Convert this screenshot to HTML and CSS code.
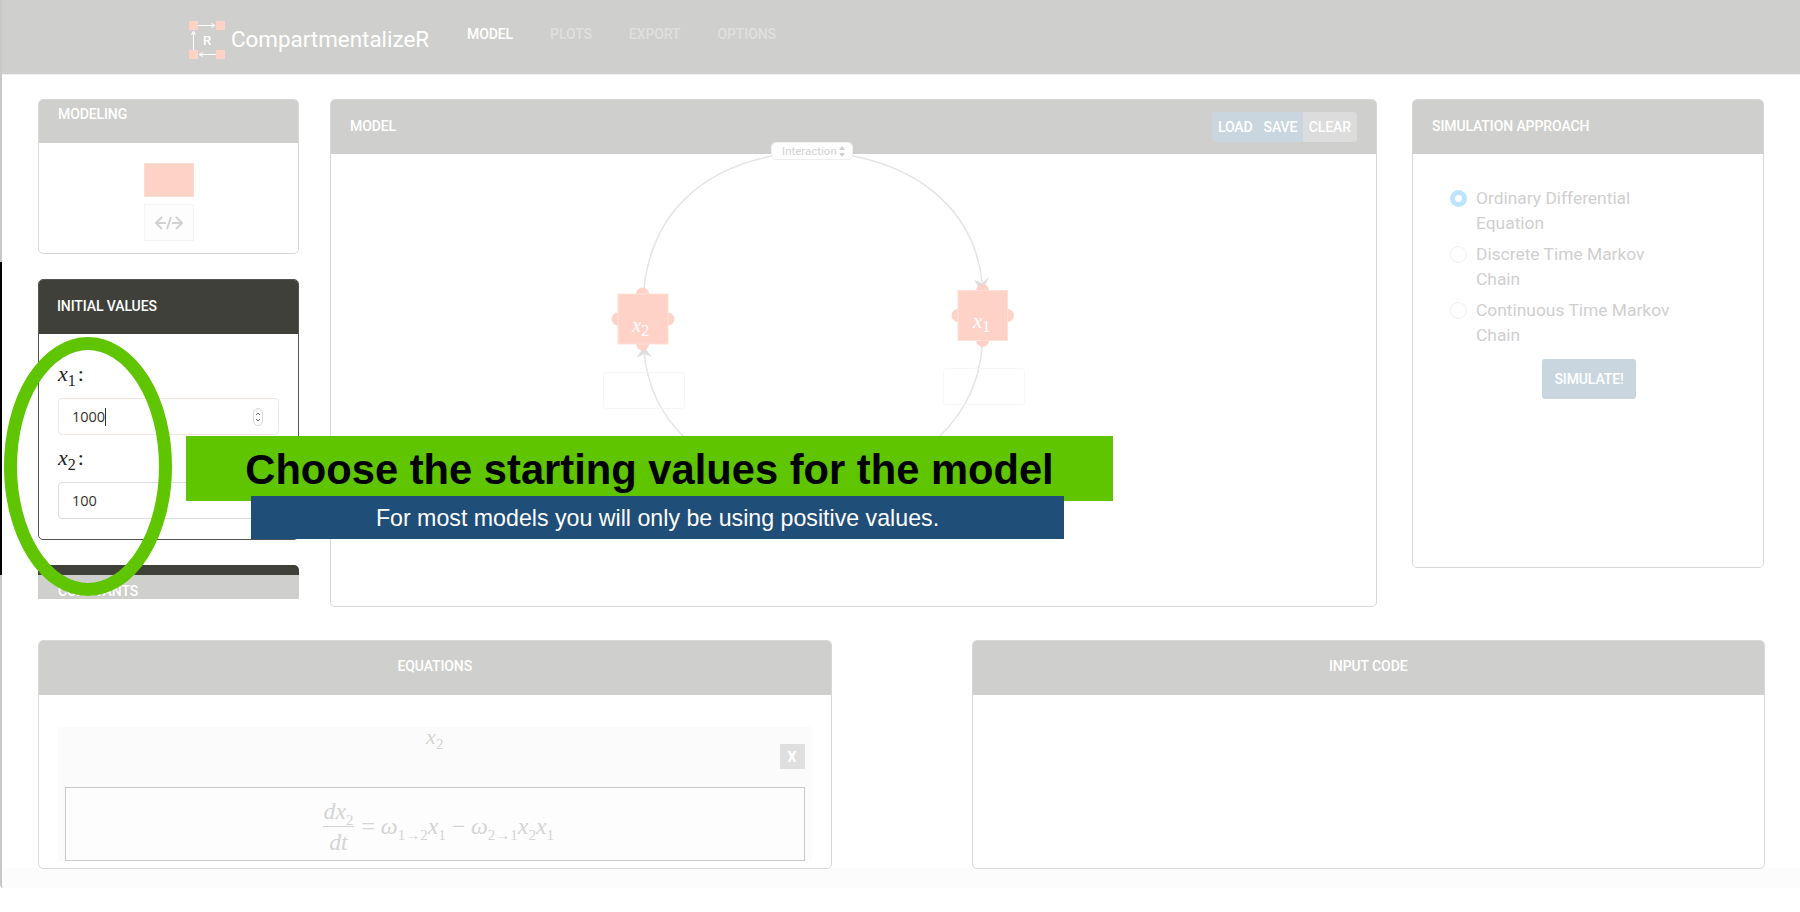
FILE: index.html
```html
<!DOCTYPE html>
<html lang="en">
<head>
    <meta charset="UTF-8">
    <title>CompartmentalizeR</title>
    <link rel="stylesheet" href="styles.css">
</head>
<body>
<div class="frame">
    <div class="edge-dark"></div>

    <nav class="navbar">
        <svg class="logo" width="37" height="38" viewBox="0 0 37 38">
            <rect x="0" y="0" width="9" height="9" fill="#ffd2c8"/>
            <rect x="27" y="0" width="9" height="9" fill="#ffd2c8"/>
            <rect x="0" y="29" width="9" height="9" fill="#ffd2c8"/>
            <rect x="27" y="29" width="9" height="9" fill="#ffd2c8"/>
            <path d="M9 4.5H25M22 2.5L26 4.5L22 6.5" stroke="#fff" stroke-width="1" fill="none"/>
            <path d="M27 33.5H11M14 31.5L10 33.5L14 35.5" stroke="#fff" stroke-width="1" fill="none"/>
            <path d="M4.5 29V11M2.5 14L4.5 10L6.5 14" stroke="#fff" stroke-width="1" fill="none"/>
            <text x="18" y="24" class="logo-r">R</text>
        </svg>
        <span class="brand">CompartmentalizeR</span>
        <ul class="nav-links">
            <li class="active">MODEL</li>
            <li>PLOTS</li>
            <li>EXPORT</li>
            <li>OPTIONS</li>
        </ul>
    </nav>

    <main class="top-row">
        <!-- left column, cut off at the bottom -->
        <aside class="sidebar">
            <section class="panel modeling">
                <div class="panel-head modeling-head">MODELING</div>
                <div class="modeling-body">
                    <div class="pink-tool"></div>
                    <div class="code-tool">
                        <svg width="28" height="14" viewBox="0 0 28 14">
                            <path d="M7 1L1 7L7 13M1 7H11M21 1L27 7L21 13M27 7H17M16 1L12 13" stroke="#d2d2d2" stroke-width="2" fill="none"/>
                        </svg>
                    </div>
                </div>
            </section>

            <section class="panel dark">
                <div class="panel-head dark-head">INITIAL VALUES</div>
                <div class="values-body">
                    <label class="math-label"><i>x</i><sub>1</sub><span class="colon">:</span></label>
                    <div class="fake-input focused">
                        <span>1000</span><span class="caret"></span>
                        <svg class="spinner" width="10" height="18" viewBox="0 0 10 18">
                            <rect x="0.5" y="0.5" width="9" height="17" rx="4.5" fill="#fff" stroke="#d8d8d8"/>
                            <path d="M3 7L5 5L7 7M3 11L5 13L7 11" stroke="#666" fill="none"/>
                        </svg>
                    </div>
                    <label class="math-label second"><i>x</i><sub>2</sub><span class="colon">:</span></label>
                    <div class="fake-input">
                        <span>100</span>
                    </div>
                </div>
            </section>

            <section class="constants">
                <div class="constants-dark"></div>
                <div class="constants-fade">CONSTANTS</div>
            </section>
        </aside>

        <section class="panel model">
            <div class="panel-head model-head">
                <span>MODEL</span>
                <div class="btn-group">
                    <button class="btn-blue">LOAD</button>
                    <button class="btn-blue">SAVE</button>
                    <button class="btn-gray">CLEAR</button>
                </div>
            </div>
            <svg class="diagram" width="1047" height="508" viewBox="330 99 1047 508">
                <path class="link" d="M644 288C652 215 700 170 772 156"/>
                <path class="link" d="M853 156C925 170 975 215 982 282"/>
                <path class="link" d="M982 347C980 380 965 412 939 437"/>
                <path class="link" d="M644 352C648 390 662 415 684 437"/>
                <rect class="slot" x="603.5" y="372.5" width="81" height="36" rx="3"/>
                <rect class="slot" x="943.5" y="368.5" width="81" height="36" rx="3"/>
                <polygon class="head" points="982,292 974,280 982,283 989,277"/>
                <polygon class="head" points="644,347 636,358 644,354 652,357"/>
                <!-- x2 node -->
                <circle class="port" cx="642.5" cy="294" r="6.5"/>
                <circle class="port" cx="642.5" cy="344" r="6.5"/>
                <circle class="port" cx="618" cy="319" r="6.5"/>
                <circle class="port" cx="668" cy="319" r="6.5"/>
                <rect class="node" x="618" y="294" width="50" height="50"/>
                <text class="node-label" x="632" y="332">x<tspan class="node-sub" dy="4">2</tspan></text>
                <!-- x1 node -->
                <circle class="port" cx="982.5" cy="290.5" r="6.5"/>
                <circle class="port" cx="982.5" cy="340.5" r="6.5"/>
                <circle class="port" cx="958" cy="315.5" r="6.5"/>
                <circle class="port" cx="1007.5" cy="315.5" r="6.5"/>
                <rect class="node" x="958" y="290.5" width="49.5" height="50"/>
                <text class="node-label" x="973" y="328">x<tspan class="node-sub" dy="4">1</tspan></text>
            </svg>
            <div class="interaction">
                <span>Interaction</span>
                <svg width="6" height="11" viewBox="0 0 6 11"><path d="M3 0L6 4H0ZM3 11L0 7H6Z" fill="#cfcfcf"/></svg>
            </div>
        </section>

        <section class="panel sim">
            <div class="panel-head sim-head">SIMULATION APPROACH</div>
            <div class="sim-body">
                <div class="radio-row">
                    <span class="radio checked"></span>
                    <span class="radio-text">Ordinary Differential Equation</span>
                </div>
                <div class="radio-row">
                    <span class="radio"></span>
                    <span class="radio-text">Discrete Time Markov Chain</span>
                </div>
                <div class="radio-row">
                    <span class="radio"></span>
                    <span class="radio-text">Continuous Time Markov Chain</span>
                </div>
                <button class="simulate">SIMULATE!</button>
            </div>
        </section>
    </main>

    <div class="bottom-row">
        <section class="panel bottom-panel">
            <div class="panel-head centered">EQUATIONS</div>
            <div class="equations-body">
                <div class="eq-card">
                    <div class="eq-top">
                        <span class="eq-name"><i>x</i><sub>2</sub></span>
                        <span class="eq-close">X</span>
                    </div>
                    <div class="eq-box">
                        <span class="fraction">
                            <span class="numer"><i>dx</i><sub>2</sub></span>
                            <span class="denom"><i>dt</i></span>
                        </span>
                        <span class="eq-rhs">= <i>ω</i><sub>1→2</sub><i>x</i><sub>1</sub> − <i>ω</i><sub>2→1</sub><i>x</i><sub>2</sub><i>x</i><sub>1</sub></span>
                    </div>
                </div>
            </div>
        </section>
        <section class="panel bottom-panel">
            <div class="panel-head centered">INPUT CODE</div>
        </section>
    </div>

    <!-- tutorial overlay -->
    <svg class="ring" width="180" height="270" viewBox="0 0 180 270">
        <ellipse cx="88" cy="134.5" rx="77.5" ry="123" fill="none" stroke="#5ec500" stroke-width="13"/>
    </svg>
    <div class="callout">
        <h1 class="callout-title">Choose the starting values for the model</h1>
        <p class="callout-sub">For most models you will only be using positive values.</p>
    </div>
</div>
</body>
</html>
```

FILE: styles.css
```css
* {
    box-sizing: border-box;
}
body {
    margin: 0;
    background-color: #fff;
    font-family: Roboto, sans-serif;
}
.frame {
    position: relative;
    height: 888px;
    border-left: 2px solid #c8c8c8;
    border-bottom-left-radius: 4px;
    background: linear-gradient(#fff 868px, #fcfcfc 868px);
}
.edge-dark {
    position: absolute;
    left: -2px;
    top: 262px;
    width: 2px;
    height: 313px;
    background-color: #000;
}

/* navbar */
.navbar {
    height: 75px;
    display: flex;
    align-items: center;
    padding-left: 187px;
    background-color: #cfcfcd;
    border-bottom: 1px solid #eee;
}
.logo {
    margin-top: 5px;
    flex-shrink: 0;
}
.logo-r {
    font-family: Roboto, sans-serif;
    font-size: 13px;
    font-weight: 500;
    fill: #fff;
    text-anchor: middle;
}
.brand {
    margin-left: 5px;
    margin-top: 4px;
    font-size: 22.4px;
    color: #fff;
}
.nav-links {
    display: flex;
    gap: 37px;
    list-style: none;
    margin: -7px 0 0 38px;
    padding: 0;
    font-size: 14px;
    font-weight: 500;
    letter-spacing: -0.1px;
    color: #e0e0de;
}
.nav-links .active {
    color: #fff;
}

/* panels */
.panel {
    border: 1.5px solid #d8d8d8;
    border-radius: 5px;
    background-color: #fff;
}
.panel-head {
    height: 54px;
    padding: 0 18px 2px 18px;
    display: flex;
    align-items: center;
    background-color: #cfcfcd;
    color: #fff;
    font-size: 14px;
    font-weight: 500;
    letter-spacing: -0.1px;
    border-radius: 4px 4px 0 0;
}
.panel-head.centered {
    justify-content: center;
    padding-bottom: 4px;
}
.top-row {
    display: grid;
    grid-template-columns: 261px 1047px 356px;
    column-gap: 31px;
    margin: 24px 0 0 36px;
    align-items: start;
}
.top-row .sim {
    margin-left: 4px;
    height: 469px;
}
.sim-head {
    padding-left: 19px;
}

/* sidebar */
.sidebar {
    height: 500px;
    overflow: hidden;
}
.modeling {
    height: 155px;
}
.modeling-head {
    height: 43px;
    align-items: flex-start;
    padding-top: 6px;
    padding-left: 19px;
}
.modeling-body {
    display: flex;
    flex-direction: column;
    align-items: center;
    padding-top: 20px;
}
.pink-tool {
    width: 50px;
    height: 34px;
    background-color: #ffd2c8;
    border: 1px solid #fbdcd5;
}
.code-tool {
    width: 50px;
    height: 37px;
    margin-top: 7px;
    display: flex;
    align-items: center;
    justify-content: center;
    background-color: #fdfdfd;
    border: 1px solid #f4f4f4;
}
.dark {
    height: 261px;
    margin-top: 25px;
    border-color: #55554f;
}
.dark-head {
    background-color: #40403a;
    height: 54px;
    padding-bottom: 2px;
}
.values-body {
    padding: 26px 19px 0 19px;
}
.math-label {
    display: block;
    height: 38px;
    font-family: "Liberation Serif", serif;
    font-size: 22px;
    color: #222;
    line-height: 28px;
}
.math-label sub {
    font-size: 16px;
    line-height: 0;
}
.colon {
    margin-left: 2px;
}
.math-label.second {
    margin-top: 9px;
}
.fake-input {
    display: flex;
    align-items: center;
    width: 221px;
    height: 37px;
    padding: 0 13px;
    font-family: "Open Sans", sans-serif;
    font-size: 14.5px;
    color: #333;
    border: 1.5px solid #ddd;
    border-radius: 4px;
    background-color: #fff;
}
.fake-input.focused {
    border-color: #efe6dd;
}
.caret {
    width: 1px;
    height: 18px;
    background-color: #333;
}
.spinner {
    margin-left: auto;
    margin-right: 2px;
}
.constants {
    margin-top: 25px;
}
.constants-dark {
    height: 10px;
    background-color: #40403a;
    border-radius: 5px 5px 0 0;
}
.constants-fade {
    height: 24px;
    padding: 8px 0 0 20px;
    background-color: #cfcfcd;
    color: #fff;
    font-size: 14px;
    line-height: 17px;
    font-weight: 500;
    letter-spacing: -0.1px;
}

/* model panel */
.model {
    position: relative;
    height: 508px;
}
.model-head {
    justify-content: space-between;
    padding-left: 19px;
    padding-right: 19px;
}
.btn-group {
    display: flex;
    height: 30px;
    margin-top: 2px;
    border-radius: 4px;
    overflow: hidden;
}
.btn-group button {
    border: 0;
    padding: 0 6px;
    font-family: Roboto, sans-serif;
    font-size: 14px;
    font-weight: 500;
    letter-spacing: -0.1px;
    color: #fff;
}
.btn-group .btn-blue {
    padding: 0 5.5px;
}
.btn-blue {
    background-color: #c9d6df;
}
.btn-gray {
    background-color: #dcdcdc;
}
.diagram {
    position: absolute;
    left: -1.5px;
    top: -1.5px;
}
.link {
    fill: none;
    stroke: #e4e4e4;
    stroke-width: 1.5;
}
.slot {
    fill: none;
    stroke: #f6f6f6;
}
.head {
    fill: #dedede;
}
.port, .node {
    fill: #ffd2c8;
}
.node {
    stroke: #ffe1da;
}
.node-label {
    font-family: "Liberation Serif", serif;
    font-style: italic;
    font-size: 21px;
    fill: #fff;
}
.node-sub {
    font-style: normal;
    font-size: 16px;
}
.interaction {
    position: absolute;
    left: 440px;
    top: 42px;
    width: 82px;
    height: 18px;
    display: flex;
    align-items: center;
    justify-content: space-between;
    padding: 0 7px 0 10px;
    background-color: #fff;
    border: 1.5px solid #eee;
    border-radius: 5px;
    font-size: 11.5px;
    color: #d2d2d2;
}

/* simulation panel */
.sim-body {
    padding: 32px 16px 0 37px;
}
.radio-row {
    display: flex;
    align-items: flex-start;
    margin-bottom: 6px;
}
.radio {
    flex-shrink: 0;
    width: 17px;
    height: 17px;
    margin-top: 4px;
    border-radius: 50%;
    border: 1px solid #f0f0f0;
    background-color: #fff;
}
.radio.checked {
    border: 5.5px solid #bde4ff;
}
.radio-text {
    width: 205px;
    margin-left: 9px;
    font-size: 17.4px;
    line-height: 25px;
    color: #cfcfcf;
}
.simulate {
    display: block;
    width: 94px;
    height: 40px;
    margin: 11px 0 0 92px;
    border: 0;
    border-radius: 3px;
    background-color: #c9d6df;
    color: #fff;
    font-family: Roboto, sans-serif;
    font-size: 14px;
    font-weight: 500;
    letter-spacing: -0.1px;
}

/* bottom row */
.bottom-row {
    display: flex;
    justify-content: space-between;
    margin: 33px 35px 0 36px;
}
.bottom-panel {
    width: 793.5px;
    height: 229px;
}
.equations-body {
    padding: 32px 19px 0 19px;
}
.eq-card {
    height: 134px;
    padding: 0 7px 0 7px;
    background-color: #fbfbfb;
}
.eq-top {
    position: relative;
    height: 60px;
    text-align: center;
    line-height: 20px;
}
.eq-name {
    font-family: "Liberation Serif", serif;
    font-size: 22px;
    color: #d4d4d4;
}
.eq-name sub, .numer sub, .eq-rhs sub {
    font-size: 15px;
    line-height: 0;
}
.eq-close {
    position: absolute;
    right: 0;
    top: 17px;
    width: 25px;
    height: 25px;
    display: flex;
    align-items: center;
    justify-content: center;
    background-color: #dfdfdf;
    color: #fff;
    font-size: 14px;
    font-weight: 700;
}
.eq-box {
    height: 74px;
    display: flex;
    align-items: center;
    justify-content: center;
    padding-top: 4px;
    padding-left: 7px;
    border: 1.5px solid #c8c8c8;
    background-color: #fdfdfd;
    font-family: "Liberation Serif", serif;
    font-size: 23.8px;
    color: #d4d4d4;
}
.fraction {
    display: inline-flex;
    flex-direction: column;
    align-items: center;
    margin-right: 7px;
    line-height: 26px;
}
.numer {
    border-bottom: 1.5px solid #d4d4d4;
    padding: 0 1px 2px 1px;
}
.denom {
    padding-top: 2px;
}

/* tutorial overlay */
.ring {
    position: absolute;
    left: -2px;
    top: 332px;
}
.callout {
    position: absolute;
    left: 184px;
    top: 436px;
    width: 927px;
    height: 103px;
}
.callout-title {
    margin: 0;
    height: 65px;
    background-color: #5ec500;
    color: #000;
    font-family: "Liberation Sans", sans-serif;
    font-size: 41.7px;
    font-weight: 700;
    line-height: 68px;
    text-align: center;
}
.callout-sub {
    position: absolute;
    left: 65px;
    top: 60px;
    width: 813px;
    height: 43px;
    margin: 0;
    background-color: #1f4e79;
    color: #fff;
    font-family: "Liberation Sans", sans-serif;
    font-size: 23.2px;
    line-height: 45px;
    text-align: center;
}
```
